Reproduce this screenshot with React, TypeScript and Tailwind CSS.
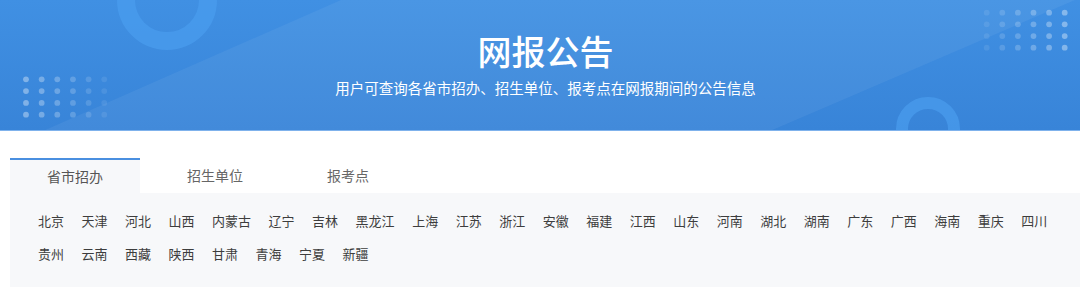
import React from "react";

const row1 = ["北京","天津","河北","山西","内蒙古","辽宁","吉林","黑龙江","上海","江苏","浙江","安徽","福建","江西","山东","河南","湖北","湖南","广东","广西","海南","重庆","四川","贵州","云南","西藏","陕西","甘肃","青海","宁夏","新疆"];

function Decor() {
  const cols = [0, 1, 2, 3, 4, 5];
  const rows = [0, 1, 2, 3];
  return (
    <svg className="absolute inset-0" width="1080" height="131" viewBox="0 0 1080 131">
      <polygon points="43,131 341,0 1075,0 770,131" fill="#ffffff" fillOpacity="0.055" />
      <circle cx="167" cy="0" r="41" fill="none" stroke="#4a9cee" strokeOpacity="0.75" strokeWidth="18" />
      <circle cx="928" cy="129" r="26" fill="none" stroke="#4a9cee" strokeOpacity="0.7" strokeWidth="12" />
      {rows.map((r) =>
        cols.map((c) => (
          <circle
            key={`l${r}-${c}`}
            cx={26 + c * 15.65}
            cy={79.3 + r * 11.8}
            r="2.9"
            fill="#ffffff"
            fillOpacity={0.36 - c * 0.055}
          />
        ))
      )}
      {rows.map((r) =>
        cols.map((c) => (
          <circle
            key={`r${r}-${c}`}
            cx={986.7 + c * 15.6}
            cy={12.7 + r * 11.67}
            r="2.9"
            fill="#ffffff"
            fillOpacity={0.09 + c * 0.055}
          />
        ))
      )}
    </svg>
  );
}

export default function App() {
  return (
    <div
      className="w-[1080px] h-[303px] overflow-hidden bg-white"
      style={{ fontFamily: '"Noto Sans CJK SC", "Noto Sans", sans-serif' }}
    >
      <div className="relative h-[131px] bg-gradient-to-b from-[#4090e3] to-[#3884d8] border-b border-[#7fb2ec] overflow-hidden">
        <Decor />
        <div className="relative flex flex-col items-center pl-[11px] pt-[28px]">
          <div className="text-[34px] leading-[46px] font-medium text-white">网报公告</div>
          <div className="mt-[4px] text-[14.5px] leading-[20px] text-white">
            用户可查询各省市招办、招生单位、报考点在网报期间的公告信息
          </div>
        </div>
      </div>
      <div className="mt-[27px] ml-[10px]">
        <div className="flex gap-[10px] h-[35px]">
          <div className="px-[37px] bg-[#f7f8fa] border-t-2 border-[#4a8fe0] text-[14px] leading-[33px] text-[#555]">
            省市招办
          </div>
          <div className="px-[37px] text-[14px] leading-[35px] text-[#666]">招生单位</div>
          <div className="px-[37px] text-[14px] leading-[35px] text-[#666]">报考点</div>
        </div>
        <div className="h-[94px] bg-[#f7f8fa] pl-[28px] pr-[28px] pt-[18px]">
          <div className="flex flex-wrap gap-x-[17.5px] gap-y-[13px]">
            {row1.map((p) => (
              <span key={p} className="text-[13px] leading-[20px] text-[#3d3d3d]">
                {p}
              </span>
            ))}
          </div>
        </div>
      </div>
    </div>
  );
}
